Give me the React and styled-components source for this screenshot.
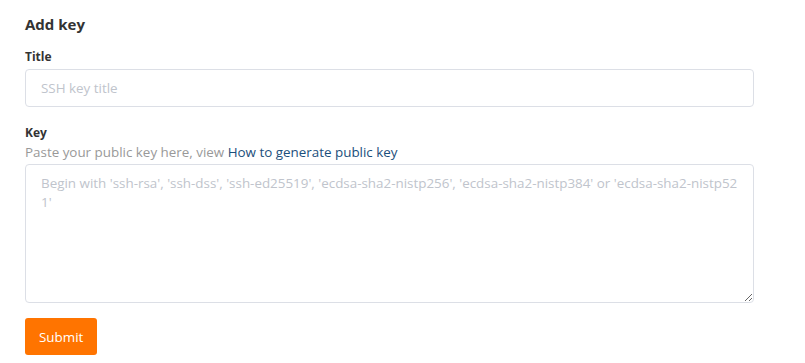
import styled, { createGlobalStyle } from 'styled-components';

const GlobalStyle = createGlobalStyle`
  body {
    margin: 0;
    background: #fff;
    font-family: "Open Sans", "Noto Sans", sans-serif;
    color: #333;
  }
`;

const Page = styled.div`
  padding: 14px 51px 0 25px;
`;

const Heading = styled.h3`
  margin: 0 0 14px;
  font-size: 15px;
  line-height: 20px;
  font-weight: 700;
  color: #333;
`;

const Field = styled.div`
  margin-bottom: ${(p) => p.gap || 16}px;
`;

const Label = styled.label`
  display: block;
  font-size: 12px;
  line-height: 17px;
  font-weight: 700;
  margin-bottom: ${(p) => p.gap || 4}px;
`;

const Help = styled.div`
  font-size: 13.4px;
  line-height: 18px;
  color: #999;
  margin: -1px 0 3px;

  a {
    color: #1b4f7c;
    text-decoration: none;
  }
`;

const Input = styled.input`
  box-sizing: border-box;
  display: block;
  width: 100%;
  height: 38px;
  padding: 0 15px;
  border: 1px solid #dcdfe6;
  border-radius: 4px;
  font-family: inherit;
  font-size: 13.4px;
  color: #333;
  outline: none;

  &::placeholder {
    color: #c0c4cc;
  }
`;

const TextArea = styled.textarea`
  box-sizing: border-box;
  display: block;
  width: 100%;
  height: 139px;
  padding: 9px 15px;
  border: 1px solid #dcdfe6;
  border-radius: 4px;
  font-family: inherit;
  font-size: 13.4px;
  line-height: 19px;
  color: #333;
  outline: none;
  resize: vertical;
  word-break: break-all;

  &::placeholder {
    color: #c0c4cc;
  }
`;

const Button = styled.button`
  height: 37px;
  padding: 0 14px;
  border: none;
  border-radius: 3px;
  background: #ff7400;
  color: #fff;
  font-family: inherit;
  font-size: 13.4px;
  cursor: pointer;
`;

export default function App() {
  return (
    <>
      <GlobalStyle />
      <Page>
        <Heading>Add key</Heading>
        <Field gap={17}>
          <Label gap={4}>Title</Label>
          <Input placeholder="SSH key title" />
        </Field>
        <Field gap={15}>
          <Label gap={3}>Key</Label>
          <Help>
            Paste your public key here, view <a href="#">How to generate public key</a>
          </Help>
          <TextArea placeholder="Begin with 'ssh-rsa', 'ssh-dss', 'ssh-ed25519', 'ecdsa-sha2-nistp256', 'ecdsa-sha2-nistp384' or 'ecdsa-sha2-nistp521'" />
        </Field>
        <Button>Submit</Button>
      </Page>
    </>
  );
}
